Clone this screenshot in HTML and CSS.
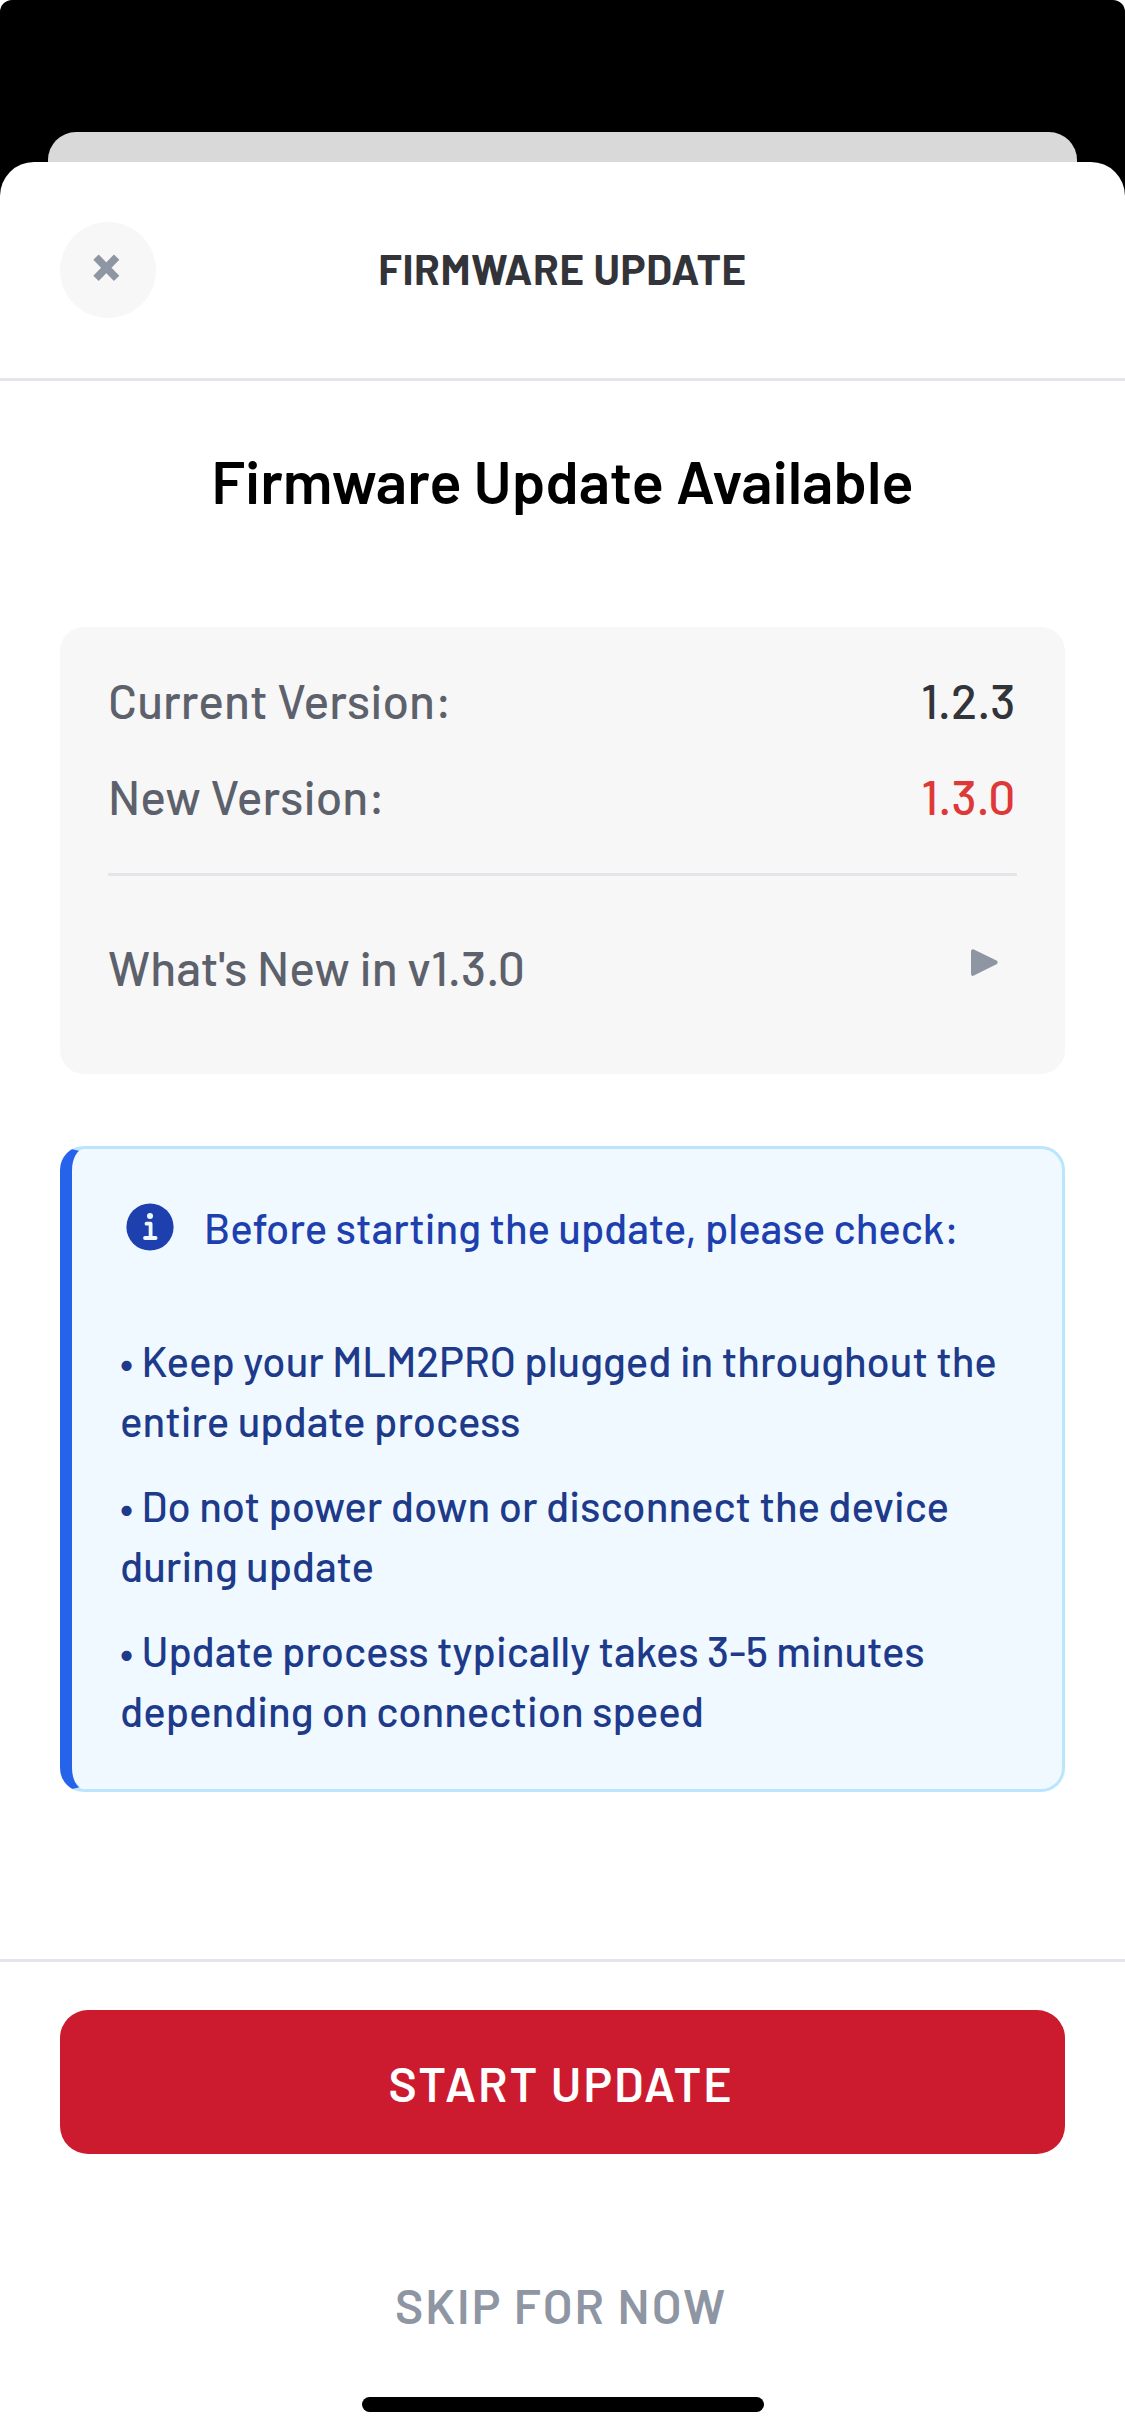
FILE: index.html
```
<!DOCTYPE html>
<html lang="en">
<head>
<meta charset="utf-8">
<title>Firmware Update</title>
<link rel="stylesheet" href="styles.css">
</head>
<body>
<div class="screen">
  <div class="backdrop"></div>
  <main class="sheet">
    <header class="header">
      <button class="close" aria-label="Close">
        <svg viewBox="0 0 28 28"><path d="M3 3.2 23.6 24.4M23.6 3.2 3 24.4"/></svg>
      </button>
      <h1 class="header-title">FIRMWARE UPDATE</h1>
    </header>
    <section class="content">
      <h2 class="heading">Firmware Update Available</h2>
      <div class="versions">
        <div class="row"><span>Current Version:</span><span class="value">1.2.3</span></div>
        <div class="row"><span>New Version:</span><span class="value value-new">1.3.0</span></div>
        <div class="divider"></div>
        <div class="row">
          <span>What's New in v1.3.0</span>
          <svg class="arrow" viewBox="0 0 27 27"><path d="M2 2.2 24.6 13.4 2 24.8Z"/></svg>
        </div>
      </div>
      <div class="notice">
        <div class="notice-head">
          <svg class="info" viewBox="0 0 48 48">
            <circle cx="24" cy="24" r="23.6"/>
            <circle class="mark" cx="24" cy="13" r="3"/>
            <path class="stroke" d="M20.5 20.7H24.6V34.6M19 35H29.6"/>
          </svg>
          <span>Before starting the update, please check:</span>
        </div>
        <div class="notice-list">
          <p>• Keep your MLM2PRO plugged in throughout the entire update process</p>
          <p>• Do not power down or disconnect the device during update</p>
          <p>• Update process typically takes 3-5 minutes depending on connection speed</p>
        </div>
      </div>
    </section>
    <footer class="footer">
      <button class="btn btn-primary">START UPDATE</button>
      <button class="btn btn-skip">SKIP FOR NOW</button>
      <div class="home"></div>
    </footer>
  </main>
</div>
</body>
</html>
```
FILE: styles.css
```
* { box-sizing: border-box; margin: 0; padding: 0; }

body {
  background: #fff;
  font-family: "Barlow", "Roboto", sans-serif;
  font-weight: 500;
}

button { border: 0; background: none; font: inherit; }

.screen {
  width: 1125px;
  height: 2436px;
  padding-top: 132px;
  overflow: hidden;
  background: #000;
  border-radius: 12px 12px 0 0;
}

.backdrop {
  height: 30px;
  margin: 0 48px;
  background: #d9d9d9;
  border-radius: 28px 28px 0 0;
}

.sheet {
  height: 2274px;
  background: #fff;
  border-radius: 34px 34px 0 0;
}

.header {
  display: grid;
  grid-template-columns: 96px 1fr 96px;
  align-items: center;
  padding: 60px;
  border-bottom: 3px solid #e4e4ea;
}

.close {
  display: flex;
  width: 96px;
  height: 96px;
  padding: 32px 0 0 33px;
  border-radius: 50%;
  background: #f7f7f7;
}

.close svg {
  width: 28px;
  height: 28px;
  fill: none;
  stroke: #8e95a3;
  stroke-width: 7.5;
}

.header-title {
  padding-bottom: 4px;
  color: #323439;
  font-size: 42px;
  font-weight: 700;
  line-height: 50px;
  letter-spacing: 0.6px;
  text-align: center;
}

.content { padding: 63px 60px 167px; }

.heading {
  color: #000;
  font-size: 60px;
  font-weight: 600;
  line-height: 72px;
  text-align: center;
}

.versions {
  margin-top: 111px;
  padding: 25px 48px 59px;
  border-radius: 24px;
  background: #f7f7f7;
  color: #5d616c;
  font-size: 48px;
}

.row {
  display: flex;
  align-items: center;
  justify-content: space-between;
  height: 96px;
}

.value { margin-right: 1.5px; color: #323439; }
.value-new { color: #df3839; }

.divider {
  height: 3px;
  margin: 29px 0 43px;
  background: #e4e4ea;
}

.arrow {
  width: 27px;
  height: 27px;
  margin: 0 19.5px 9px 0;
  fill: #8e95a3;
  stroke: #8e95a3;
  stroke-width: 4;
  stroke-linejoin: round;
}

.notice {
  margin-top: 72px;
  padding: 54px 48px 49px;
  border: 3px solid #bae6fd;
  border-left: 12px solid #2563eb;
  border-radius: 24px;
  background: #f0f9ff;
  font-size: 42px;
}

.notice-head {
  display: flex;
  align-items: center;
  gap: 30px;
  height: 48px;
  padding-left: 6px;
  color: #1e40af;
}

.info { width: 48px; height: 48px; fill: #1e40af; }
.info .mark { fill: #f0f9ff; }
.info .stroke {
  fill: none;
  stroke: #f0f9ff;
  stroke-width: 3.8;
  stroke-linecap: round;
  stroke-linejoin: round;
}

.notice-list {
  display: grid;
  gap: 25px;
  margin-top: 79px;
  color: #1e3a8a;
  line-height: 60px;
}

.footer {
  display: flex;
  flex-direction: column;
  align-items: center;
  padding: 48px 60px 0;
  border-top: 3px solid #e4e4ea;
}

.btn {
  width: 100%;
  height: 144px;
  padding-right: 3px;
  border-radius: 28px;
  font-size: 48px;
  font-weight: 600;
  letter-spacing: 2px;
}

.btn-primary { padding-top: 1px; background: #cc1b2f; color: #fff; }
.btn-skip { margin-top: 79px; color: #8e95a3; }

.home {
  width: 402px;
  height: 15px;
  margin-top: 20px;
  border-radius: 8px;
  background: #000;
}
```
